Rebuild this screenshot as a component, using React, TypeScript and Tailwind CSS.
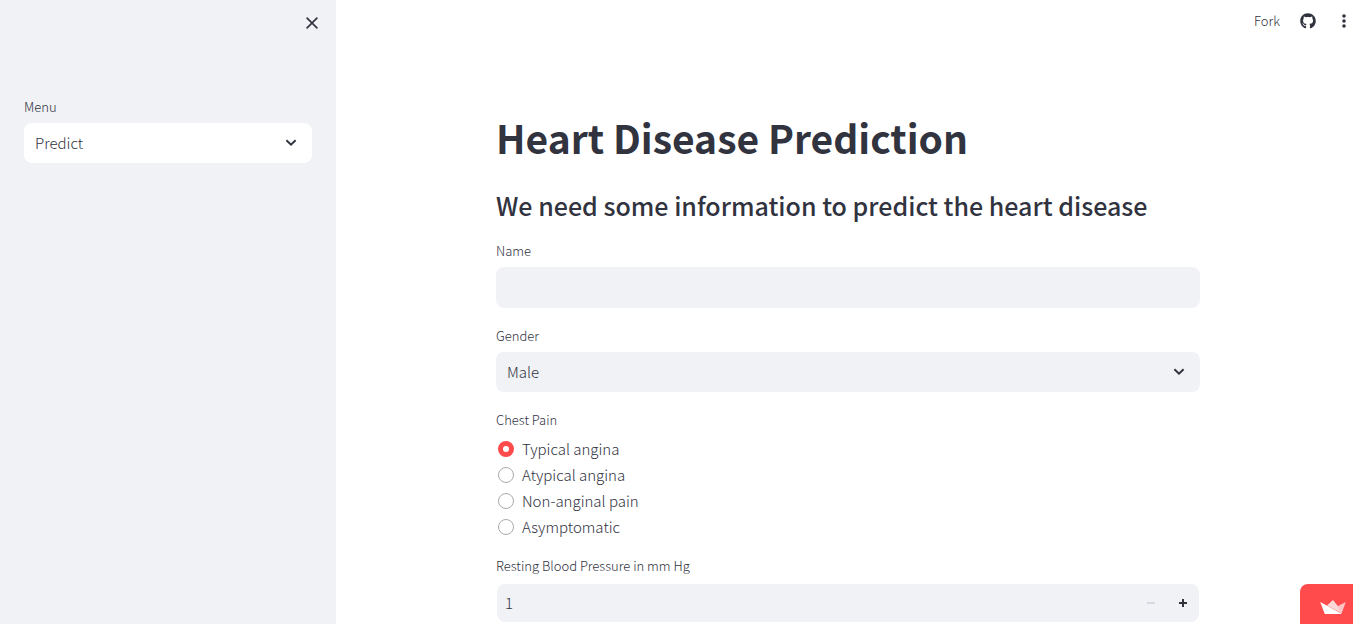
import { useId, useState } from "react";
import type { ReactNode } from "react";
import { FaGithub } from "react-icons/fa";

const CHEST_PAIN = ["Typical angina", "Atypical angina", "Non-anginal pain", "Asymptomatic"];

function Chevron() {
  return (
    <svg viewBox="0 0 12 8" className="h-2 w-3" fill="none" stroke="#31333f" strokeWidth="2" aria-hidden="true">
      <path d="M1.4 1.2 6 5.6l4.6-4.4" />
    </svg>
  );
}

function Label({ htmlFor, children }: { htmlFor: string; children: ReactNode }) {
  return (
    <label htmlFor={htmlFor} className="mb-1 block text-[13px] leading-6">
      {children}
    </label>
  );
}

function SelectField({ label, options, tone }: { label: string; options: string[]; tone: string }) {
  const id = useId();
  return (
    <div>
      <Label htmlFor={id}>{label}</Label>
      <div className="relative">
        <select
          id={id}
          className={`block h-10 w-full appearance-none rounded-lg pr-10 pl-[11px] text-[15px] leading-6 outline-none ${tone}`}
        >
          {options.map((o) => (
            <option key={o}>{o}</option>
          ))}
        </select>
        <span className="pointer-events-none absolute inset-y-0 right-[15px] flex items-center">
          <Chevron />
        </span>
      </div>
    </div>
  );
}

function Sidebar() {
  return (
    <aside className="w-[336px] shrink-0 bg-[#f0f2f6] px-[18px]">
      <div className="flex h-[95px] justify-end pt-[17px]">
        <button type="button" aria-label="Close sidebar" className="h-3">
          <svg viewBox="0 0 12 12" className="h-3 w-3" fill="none" stroke="#31333f" strokeWidth="1.6">
            <path d="M.6.6l10.8 10.8M11.4.6.6 11.4" />
          </svg>
        </button>
      </div>
      <div className="px-1.5">
        <SelectField label="Menu" options={["Predict", "Home"]} tone="bg-white" />
      </div>
    </aside>
  );
}

function Toolbar() {
  return (
    <header className="flex h-[42px] items-center justify-end gap-5 pr-[7px]">
      <a href="#fork" className="text-[13px] leading-6">
        Fork
      </a>
      <a href="#source" aria-label="View source on GitHub">
        <FaGithub className="h-4 w-4" />
      </a>
      <button type="button" aria-label="Main menu" className="ml-1.5">
        <svg viewBox="0 0 4 14" className="h-[14px] w-1" fill="currentColor">
          <circle cx="2" cy="2" r="1.8" />
          <circle cx="2" cy="7" r="1.8" />
          <circle cx="2" cy="12" r="1.8" />
        </svg>
      </button>
    </header>
  );
}

function RadioGroup() {
  const [picked, setPicked] = useState(CHEST_PAIN[0]);
  return (
    <fieldset>
      <legend className="text-[13px] leading-6">Chest Pain</legend>
      <div className="flex flex-col items-start gap-1 pt-1.5">
        {CHEST_PAIN.map((name) => (
          <label key={name} className="flex items-center gap-2 pl-0.5 text-[15px] leading-[22px]">
            <input
              type="radio"
              name="chest-pain"
              checked={picked === name}
              onChange={() => setPicked(name)}
              className="h-4 w-4 appearance-none rounded-full border border-[#a9aab0] bg-white checked:border-5 checked:border-[#ff4b4b]"
            />
            {name}
          </label>
        ))}
      </div>
    </fieldset>
  );
}

function PressureField() {
  const id = useId();
  const [value, setValue] = useState(1);
  return (
    <div>
      <Label htmlFor={id}>Resting Blood Pressure in mm Hg</Label>
      <div className="mx-px mt-1.5 flex h-[38px] overflow-hidden rounded-lg bg-[#f0f2f6]">
        <input
          id={id}
          type="text"
          inputMode="numeric"
          value={value}
          onChange={(e) => setValue(Number(e.target.value) || 1)}
          className="min-w-0 flex-1 bg-transparent pl-2 text-[15px] leading-6 outline-none"
        />
        <button
          type="button"
          aria-label="Decrease"
          disabled={value <= 1}
          onClick={() => setValue(value - 1)}
          className="flex w-8 items-center justify-center disabled:text-[#d5dae5]"
        >
          <svg viewBox="0 0 8 8" className="h-2 w-2" fill="currentColor">
            <path d="M0 3h8v2H0z" />
          </svg>
        </button>
        <button
          type="button"
          aria-label="Increase"
          onClick={() => setValue(value + 1)}
          className="flex w-8 items-center justify-center"
        >
          <svg viewBox="0 0 8 8" className="h-2 w-2" fill="currentColor">
            <path d="M3 0h2v3h3v2H5v3H3V5H0V3h3z" />
          </svg>
        </button>
      </div>
    </div>
  );
}

function HostBadge() {
  return (
    <a
      href="#host"
      aria-label="Hosted with Streamlit"
      className="fixed right-0 bottom-0 flex h-10 w-[53px] items-center justify-end rounded-tl-lg bg-[#ff4b4b] pt-1.5 pr-[7px]"
    >
      <svg viewBox="0 0 26 14" className="h-[14px] w-[26px]">
        <path d="M13 .1 18.8 7.2 21.3 13 7 5.4z" fill="#ffd9da" />
        <path d="M25.8 2 17.6 6.2 21.4 14z" fill="#ffc4c6" />
        <path d="M.2 2.1 21.4 13.6Q21.2 14 20.8 14H5.2Q4.8 14 4.6 13.6z" fill="#fff" />
      </svg>
    </a>
  );
}

export default function App() {
  const nameId = useId();
  return (
    <div className="flex min-h-screen bg-white font-['Noto_Sans_CJK_SC','Noto_Sans',sans-serif] font-light text-[#31333f]">
      <Sidebar />
      <div className="min-w-0 flex-1">
        <Toolbar />
        <main className="pl-[7px]">
          <div className="mx-auto max-w-[736px] px-4 pt-[67px]">
            <h1 className="text-[39px] leading-[56px] font-bold">Heart Disease Prediction</h1>
            <h2 className="pt-[22px] text-[25px] leading-9 font-medium">
              We need some information to predict the heart disease
            </h2>
            <form className="flex flex-col gap-4 pt-4" onSubmit={(e) => e.preventDefault()}>
              <div>
                <Label htmlFor={nameId}>Name</Label>
                <input
                  id={nameId}
                  type="text"
                  className="block h-[41px] w-full rounded-lg bg-[#f0f2f6] px-[11px] text-[15px] outline-none"
                />
              </div>
              <SelectField label="Gender" options={["Male", "Female"]} tone="bg-[#f0f2f6]" />
              <RadioGroup />
              <PressureField />
            </form>
          </div>
        </main>
      </div>
      <HostBadge />
    </div>
  );
}
